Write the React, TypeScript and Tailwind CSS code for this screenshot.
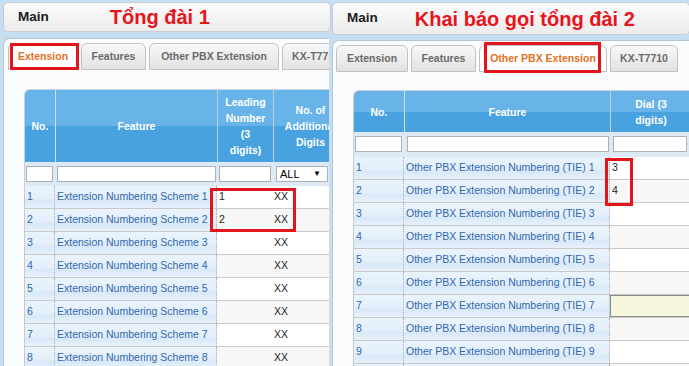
import React from 'react';

type Tab = { label: string; w: string; active?: boolean };

const leftTabs: Tab[] = [
  { label: 'Extension', w: 'w-[70px]', active: true },
  { label: 'Features', w: 'w-[65px]' },
  { label: 'Other PBX Extension', w: 'w-[130px]' },
  { label: 'KX-T7710', w: 'w-[68px]' },
];

const rightTabs: Tab[] = [
  { label: 'Extension', w: 'w-[72px]' },
  { label: 'Features', w: 'w-[65px]' },
  { label: 'Other PBX Extension', w: 'w-[128px]', active: true },
  { label: 'KX-T7710', w: 'w-[68px]' },
];

const blueCell =
  'flex items-center border-r border-dotted border-r-[#a3b2c3] bg-[linear-gradient(#e9f3fc_0%,#e4effa_55%,#d9e8f7_68%,#e7f1fb_100%)] pl-[2px] text-[#2f68ad]';
const headCell = 'flex items-center justify-center text-center font-bold text-white';
const inputBox = 'h-[16px] border border-[#aab1b8] bg-white';

function MainBar({ title, h, gap }: { title: string; h: string; gap: string }) {
  return (
    <div
      className={`flex ${h} items-center rounded-[5px] border border-[#c6ccd3] bg-[linear-gradient(#fbfbfb,#ececec)] pl-[14px]`}
    >
      <span className="text-[13.5px] font-bold text-[#1b1b1b]">Main</span>
      <span className={`${gap} text-[20px] font-bold leading-none text-[#e8141c]`}>{title}</span>
    </div>
  );
}

function Tabs({ tabs, pl }: { tabs: Tab[]; pl: string }) {
  return (
    <div className={`flex gap-[3px] ${pl} pt-[4px]`}>
      {tabs.map((t) => (
        <div
          key={t.label}
          className={`flex h-[27px] shrink-0 items-center justify-center rounded-t-[6px] border border-[#c2c2c2] text-[10.5px] font-bold ${t.w} ${
            t.active
              ? 'bg-white text-[#e2701c]'
              : 'bg-[linear-gradient(#f8f8f8,#e2e2e2)] text-[#6a6a6a]'
          }`}
        >
          {t.label}
        </div>
      ))}
    </div>
  );
}

function LeftTable() {
  const rows = [1, 2, 3, 4, 5, 6, 7, 8, 9];
  return (
    <div className="ml-[20px] mt-[19px] w-[322px] text-[10.5px]">
      <div className="grid h-[73px] grid-cols-[30px_162px_56px_74px] overflow-hidden rounded-tl-[6px] border-l border-t border-[#c9d3dc] bg-[linear-gradient(#68b3e7_50%,#47a2df_50%)] leading-[16px]">
        <div className={headCell}>No.</div>
        <div className={`${headCell} border-l border-[#d2dde8]`}>Feature</div>
        <div className={`${headCell} border-l border-[#c4ccd4]`}>
          Leading
          <br />
          Number
          <br />
          (3
          <br />
          digits)
        </div>
        <div className={`${headCell} whitespace-nowrap border-l border-[#c4ccd4]`}>
          No. of
          <br />
          Additional
          <br />
          Digits
        </div>
      </div>
      <div className="grid h-[24px] grid-cols-[30px_162px_56px_74px] border-l border-[#c9d3dc] bg-[#dde9f5] pt-[4px]">
        <div className={`${inputBox} ml-[1px] w-[27px]`} />
        <div className={`${inputBox} ml-[2px] w-[159px]`} />
        <div className={`${inputBox} ml-[2px] w-[52px]`} />
        <div className={`${inputBox} ml-[3px] flex w-[52px] items-center justify-between pl-[3px] pr-[6px] text-[11px] text-black`}>
          <span>ALL</span>
          <span className="text-[8px]">▼</span>
        </div>
      </div>
      {rows.map((r) => (
        <div
          key={r}
          className={`grid h-[23px] grid-cols-[30px_162px_56px_74px] border-b border-l border-[#c9c9c9] ${
            r % 2 === 0 ? 'bg-[#f7f7f7]' : 'bg-white'
          }`}
        >
          <div className={blueCell}>{r}</div>
          <div className={`${blueCell} whitespace-nowrap`}>Extension Numbering Scheme {r}</div>
          <div className="flex items-center pl-[2px] text-[#222]">{r <= 2 ? r : ''}</div>
          <div className="flex items-center pl-[1px] text-[#222]">XX</div>
        </div>
      ))}
    </div>
  );
}

function RightTable() {
  const rows = [1, 2, 3, 4, 5, 6, 7, 8, 9, 10];
  const dial: Record<number, string> = { 1: '3', 2: '4' };
  return (
    <div className="ml-[20px] mt-[18px] w-[337px] text-[10.5px]">
      <div className="grid h-[42px] grid-cols-[50px_206px_81px] overflow-hidden rounded-tl-[6px] border-l border-t border-[#c9d3dc] bg-[linear-gradient(#68b3e7_50%,#47a2df_50%)] leading-[16px]">
        <div className={headCell}>No.</div>
        <div className={`${headCell} border-l border-[#d2dde8]`}>Feature</div>
        <div className={`${headCell} border-l border-[#c4ccd4]`}>
          Dial (3
          <br />
          digits)
        </div>
      </div>
      <div className="grid h-[25px] grid-cols-[50px_206px_81px] border-l border-[#c9d3dc] bg-[#dde9f5] pt-[4px]">
        <div className={`${inputBox} ml-[1px] w-[47px]`} />
        <div className={`${inputBox} ml-[3px] w-[202px]`} />
        <div className={`${inputBox} ml-[3px] w-[74px]`} />
      </div>
      {rows.map((r) => (
        <div
          key={r}
          className={`grid h-[23px] grid-cols-[50px_206px_81px] border-b border-l border-[#c9c9c9] ${
            r % 2 === 0 ? 'bg-[#f7f7f7]' : 'bg-white'
          }`}
        >
          <div className={blueCell}>{r}</div>
          <div className={`${blueCell} whitespace-nowrap`}>Other PBX Extension Numbering (TIE) {r}</div>
          {r === 7 ? (
            <div className="border border-[#8c8c8c] bg-[#f6f6dc]" />
          ) : (
            <div className="flex items-center pl-[2px] text-[#222]">{dial[r] ?? ''}</div>
          )}
        </div>
      ))}
    </div>
  );
}

export default function App() {
  return (
    <div className="relative flex h-[366px] w-[689px] overflow-hidden bg-[#c7ddf1] font-['Liberation_Sans',Arial,sans-serif]">
      {/* Tổng đài 1 */}
      <div className="flex w-[331px] shrink-0 flex-col pl-[3px] pt-[2px]">
        <MainBar title="Tổng đài 1" h="h-[30px]" gap="ml-[61px]" />
        <div className="mt-[6px] w-[326px] flex-1 overflow-hidden rounded-tl-[7px] border-l border-t border-[#b7c5d3] bg-[#fbfcfd]">
          <Tabs tabs={leftTabs} pl="pl-[4px]" />
          <LeftTable />
        </div>
      </div>

      {/* Tổng đài 2 */}
      <div className="flex flex-1 flex-col pl-[1px] pt-[2px]">
        <MainBar title="Khai báo gọi tổng đài 2" h="h-[33px]" gap="ml-[37px]" />
        <div className="mt-[5px] flex-1 overflow-hidden rounded-tl-[7px] border-l border-t border-[#b7c5d3] bg-[#fbfcfd]">
          <Tabs tabs={rightTabs} pl="pl-[3px]" />
          <RightTable />
        </div>
      </div>

      {/* annotation boxes */}
      <div className="absolute left-[10px] top-[43px] h-[27px] w-[69px] border-[3px] border-[#e3151c]" />
      <div className="absolute left-[210px] top-[188px] h-[44px] w-[86px] border-[3px] border-[#e3151c]" />
      <div className="absolute left-[484px] top-[42px] h-[31px] w-[117px] border-[3px] border-[#e3151c]" />
      <div className="absolute left-[605px] top-[158px] h-[48px] w-[28px] border-[3px] border-[#e3151c]" />
    </div>
  );
}
